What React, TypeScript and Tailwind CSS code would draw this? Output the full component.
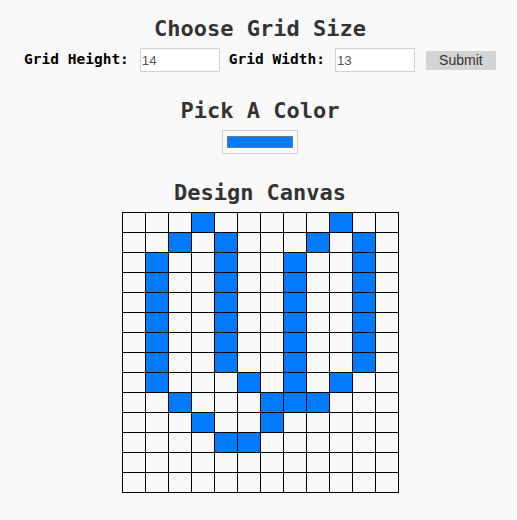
import React from "react";

const ROWS = 14;
const COLS = 12;

// painted cells, "row,col"
const painted = new Set<string>([
    "0,3", "0,9",
    "1,2", "1,4", "1,8", "1,10",
    "2,1", "2,4", "2,7", "2,10",
    "3,1", "3,4", "3,7", "3,10",
    "4,1", "4,4", "4,7", "4,10",
    "5,1", "5,4", "5,7", "5,10",
    "6,1", "6,4", "6,7", "6,10",
    "7,1", "7,4", "7,7", "7,10",
    "8,1", "8,5", "8,7", "8,9",
    "9,2", "9,6", "9,7", "9,8",
    "10,3", "10,6",
    "11,4", "11,5",
]);

export default function App() {
    const cells = [];
    for (let r = 0; r < ROWS; r++) {
        for (let c = 0; c < COLS; c++) {
            const on = painted.has(`${r},${c}`);
            cells.push(
                <div key={`${r}-${c}`} className={on ? "bg-[#007bff]" : "bg-[#f9f9f9]"} />
            );
        }
    }

    return (
        <main className="min-h-[520px] bg-[#f9f9f9] pl-[3px] flex flex-col items-center">
            {/* Grid size */}
            <h1 className="mt-[15px] h-[28px] leading-[28px] text-[22px] font-bold text-[#333] font-['DejaVu_Sans_Mono','Liberation_Mono',monospace]">
                Choose Grid Size
            </h1>
            <form className="mt-[5px] h-[24px] flex items-center" onSubmit={(e) => e.preventDefault()}>
                <label className="text-[14.5px] font-bold text-black font-['DejaVu_Sans_Mono','Liberation_Mono',monospace]">
                    Grid Height:
                </label>
                <input
                    type="number"
                    defaultValue={14}
                    className="ml-[11px] w-[80px] h-[24px] border border-[#d0d0d0] bg-white px-[1px] text-[13.33px] text-[#555] outline-none [appearance:textfield] font-['Liberation_Sans',Arial,sans-serif]"
                />
                <label className="ml-[9px] text-[14.5px] font-bold text-black font-['DejaVu_Sans_Mono','Liberation_Mono',monospace]">
                    Grid Width:
                </label>
                <input
                    type="number"
                    defaultValue={13}
                    className="ml-[10px] w-[80px] h-[24px] border border-[#d0d0d0] bg-white px-[1px] text-[13.33px] text-[#555] outline-none [appearance:textfield] font-['Liberation_Sans',Arial,sans-serif]"
                />
                <button
                    type="submit"
                    className="ml-[11px] w-[70px] h-[19px] bg-[#d4d4d4] text-[14px] leading-[19px] text-[#333] font-['Liberation_Sans',Arial,sans-serif]"
                >
                    Submit
                </button>
            </form>

            {/* Color */}
            <h2 className="mt-[25px] h-[28px] leading-[28px] text-[22px] font-bold text-[#333] font-['DejaVu_Sans_Mono','Liberation_Mono',monospace]">
                Pick A Color
            </h2>
            <div className="mt-[5px] w-[76px] h-[24px] border border-[#d0d0d0] bg-[#f9f9f9] flex items-center justify-center">
                <div className="w-[66px] h-[12px] bg-[#007bff] border border-[#6b7c8f]" />
            </div>

            {/* Canvas */}
            <h2 className="mt-[25px] h-[28px] leading-[28px] text-[22px] font-bold text-[#333] font-['DejaVu_Sans_Mono','Liberation_Mono',monospace]">
                Design Canvas
            </h2>
            <div className="mt-[5px] grid grid-cols-[repeat(12,22px)] auto-rows-[19px] gap-px p-px bg-black">
                {cells}
            </div>
        </main>
    );
}
